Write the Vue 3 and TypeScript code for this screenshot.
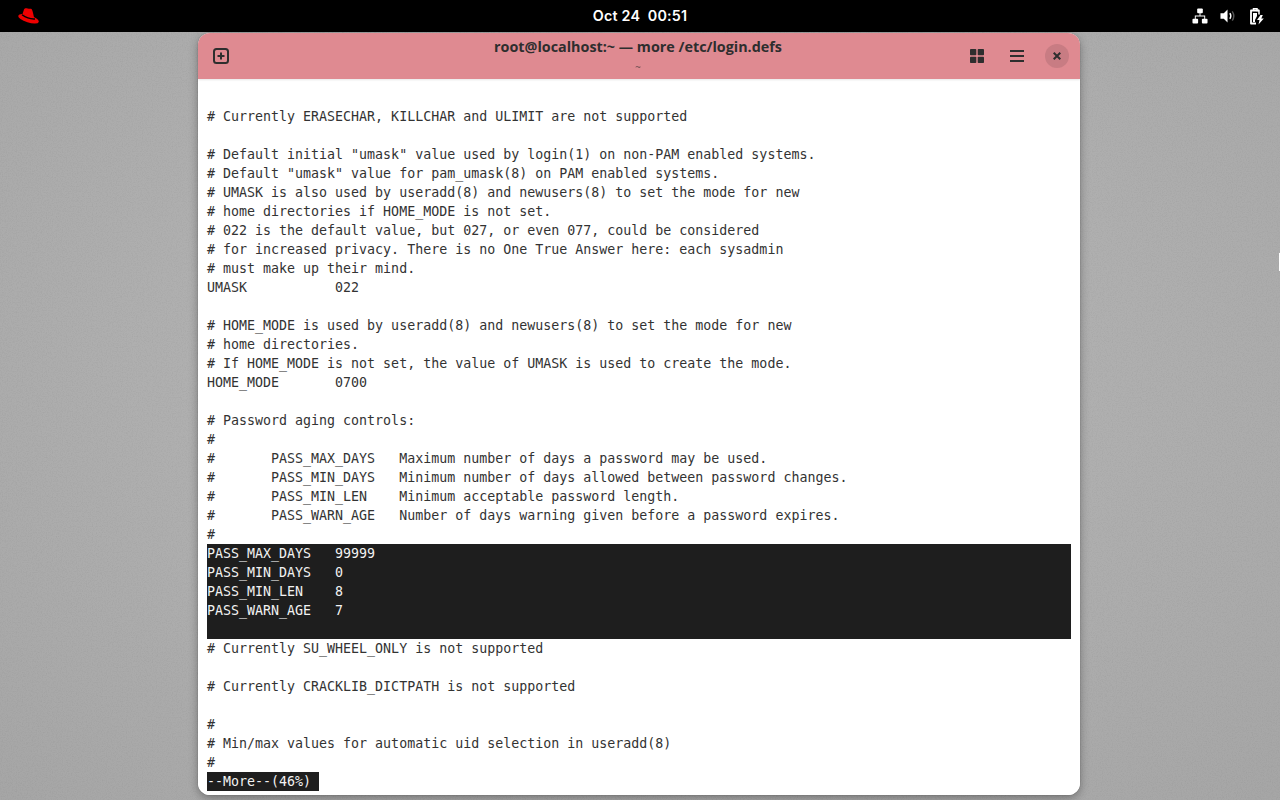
<script setup lang="ts">
const lines: { text: string; inv?: boolean }[] = [
  { text: '' },
  { text: '# Currently ERASECHAR, KILLCHAR and ULIMIT are not supported' },
  { text: '' },
  { text: '# Default initial "umask" value used by login(1) on non-PAM enabled systems.' },
  { text: '# Default "umask" value for pam_umask(8) on PAM enabled systems.' },
  { text: '# UMASK is also used by useradd(8) and newusers(8) to set the mode for new' },
  { text: '# home directories if HOME_MODE is not set.' },
  { text: '# 022 is the default value, but 027, or even 077, could be considered' },
  { text: '# for increased privacy. There is no One True Answer here: each sysadmin' },
  { text: '# must make up their mind.' },
  { text: 'UMASK           022' },
  { text: '' },
  { text: '# HOME_MODE is used by useradd(8) and newusers(8) to set the mode for new' },
  { text: '# home directories.' },
  { text: '# If HOME_MODE is not set, the value of UMASK is used to create the mode.' },
  { text: 'HOME_MODE       0700' },
  { text: '' },
  { text: '# Password aging controls:' },
  { text: '#' },
  { text: '#       PASS_MAX_DAYS   Maximum number of days a password may be used.' },
  { text: '#       PASS_MIN_DAYS   Minimum number of days allowed between password changes.' },
  { text: '#       PASS_MIN_LEN    Minimum acceptable password length.' },
  { text: '#       PASS_WARN_AGE   Number of days warning given before a password expires.' },
  { text: '#' },
  { text: 'PASS_MAX_DAYS   99999', inv: true },
  { text: 'PASS_MIN_DAYS   0', inv: true },
  { text: 'PASS_MIN_LEN    8', inv: true },
  { text: 'PASS_WARN_AGE   7', inv: true },
  { text: '', inv: true },
  { text: '# Currently SU_WHEEL_ONLY is not supported' },
  { text: '' },
  { text: '# Currently CRACKLIB_DICTPATH is not supported' },
  { text: '' },
  { text: '#' },
  { text: '# Min/max values for automatic uid selection in useradd(8)' },
  { text: '#' },
]
</script>

<template>
  <div class="screen">
    <svg class="grain" width="1280" height="800">
      <filter id="grain-f">
        <feTurbulence type="fractalNoise" baseFrequency="0.8" numOctaves="2" seed="4" />
        <feColorMatrix type="matrix" values="0 0 0 0 0  0 0 0 0 0  0 0 0 0 0  1.2 0 0 0 -0.5" />
      </filter>
      <rect width="1280" height="800" filter="url(#grain-f)" opacity="0.07" />
    </svg>
    <header class="topbar">
      <svg class="hat" width="21" height="16" viewBox="0 0 21 16">
        <path d="M4.500 6L6 1.600C6.500.3 8 0 9.500.6c1.500.4 3 -.4 4 .4 1 .8 2 5.500 2.500 8.500Z" fill="#ee0000"/>
        <ellipse cx="10.500" cy="10.800" rx="10.700" ry="3.700" transform="rotate(17 10.500 10.800)" fill="#ee0000"/>
        <path d="M4 6.800C8 9.700 12 11.400 17 11" fill="none" stroke="#000" stroke-width="1.400"/>
      </svg>
      <span class="clock">Oct 24&nbsp; 00:51</span>
      <div class="tray">
        <svg width="16" height="16" viewBox="0 0 17 17" fill="#fff">
          <rect x="5.500" y="0.500" width="6" height="5" rx="1"/>
          <rect x="0.500" y="11.500" width="6" height="5" rx="1"/>
          <rect x="10.500" y="11.500" width="6" height="5" rx="1"/>
          <path d="M8 5h1v3h5v4h-1V9H4v3H3V8h5Z"/>
        </svg>
        <svg width="16" height="16" viewBox="0 0 17 17">
          <path d="M8 1.500v14L4 11.500H0.500v-6H4Z" fill="#fff"/>
          <path d="M10.500 5.500c1.200 1.800 1.200 4.200 0 6" fill="none" stroke="#fff" stroke-width="1.500"/>
          <path d="M13 3.500c2 3 2 7 0 10" fill="none" stroke="#555" stroke-width="1.500"/>
        </svg>
        <svg class="batt" width="16" height="17" viewBox="0 0 16 17" fill="none">
          <path d="M4.500 2.500V.8h3.500v1.700h2v4" stroke="#fff" stroke-width="1.500"/>
          <path d="M10 2.500H2v13h5" stroke="#fff" stroke-width="1.800" stroke-linejoin="round"/>
          <path d="M4 5h4v3L6 12v2H4Z" fill="#fff"/>
          <path d="M11.500 7l-3.500 5h2.500l-1 4.500 5.300-6h-2.500l1.500-3.500Z" fill="#fff"/>
        </svg>
      </div>
    </header>

    <main class="desktop">
      <section class="window">
        <div class="titlebar">
          <div class="side">
            <button class="icon-btn left">
              <svg width="16" height="16" viewBox="0 0 16 16" fill="none" stroke="#2e2e2e">
                <rect x="1" y="1" width="14" height="14" rx="2.500" stroke-width="2"/>
                <path d="M8 4.500v7M4.500 8h7" stroke-width="2"/>
              </svg>
            </button>
          </div>
          <div class="titles">
            <div class="title">root@localhost:~ — more /etc/login.defs</div>
            <div class="subtitle">~</div>
          </div>
          <div class="side end">
            <button class="icon-btn grid">
              <svg width="14" height="14" viewBox="0 0 14 14" fill="#2e2e2e">
                <rect width="6.300" height="6.300" rx="0.800"/>
                <rect x="7.700" width="6.300" height="6.300" rx="0.800"/>
                <rect y="7.700" width="6.300" height="6.300" rx="0.800"/>
                <rect x="7.700" y="7.700" width="6.300" height="6.300" rx="0.800"/>
              </svg>
            </button>
            <button class="icon-btn menu">
              <svg width="14" height="12" viewBox="0 0 14 12" fill="#2e2e2e">
                <rect width="14" height="2"/>
                <rect y="5" width="14" height="2"/>
                <rect y="10" width="14" height="2"/>
              </svg>
            </button>
            <button class="icon-btn close">
              <svg width="8" height="8" viewBox="0 0 8 8" fill="none" stroke="#2e2e2e" stroke-width="2">
                <path d="M.7.7l6.600 6.600M7.300.7L.7 7.300"/>
              </svg>
            </button>
          </div>
        </div>
        <div class="term">
          <div v-for="(l, i) in lines" :key="i" class="row" :class="{ inv: l.inv }">{{ l.text }}</div>
          <div class="row"><span class="more">--More--(46%)&nbsp;</span></div>
        </div>
      </section>
    </main>
    <i class="cursor"></i>
  </div>
</template>

<style>
html, body { margin: 0; background: #000; }
</style>

<style scoped>
.screen {
  position: relative;
  width: 1280px;
  height: 800px;
  overflow: hidden;
  display: flex;
  flex-direction: column;
  background: radial-gradient(ellipse 900px 620px at 640px 350px, #b5b5b5 0%, #afafaf 55%, #a6a6a6 100%);
}
.grain {
  position: absolute;
  left: 0;
  top: 0;
}
.topbar {
  height: 32px;
  flex: none;
  background: #000;
  display: grid;
  grid-template-columns: 1fr auto 1fr;
  align-items: center;
  color: #fff;
  position: relative;
  z-index: 2;
}
.hat { margin-left: 18px; margin-top: 0; }
.clock {
  font: 600 14.300px "Inter", "Open Sans", sans-serif;
  letter-spacing: .2px;
  margin-top: -1px;
}
.tray {
  justify-self: end;
  display: flex;
  gap: 12px;
  padding-right: 15px;
}
.batt { margin-left: 1px; }
.desktop {
  flex: 1;
  min-height: 0;
  padding: 1px 200px 5px 198px;
  position: relative;
}
.window {
  height: 100%;
  display: flex;
  flex-direction: column;
  border-radius: 12px;
  overflow: hidden;
  background: #fff;
  box-shadow: 0 3px 10px rgba(0,0,0,.32), 0 0 0 1px rgba(0,0,0,.05);
}
.titlebar {
  height: 46px;
  flex: none;
  background: #df8a91;
  display: grid;
  grid-template-columns: 1fr auto 1fr;
  align-items: center;
  box-shadow: 0 1px 2px rgba(0,0,0,.1);
  position: relative;
  z-index: 1;
}
.side { display: flex; align-items: center; }
.side.end { justify-content: flex-end; }
.icon-btn {
  border: 0;
  background: none;
  padding: 0;
  display: flex;
  align-items: center;
  justify-content: center;
  flex: none;
}
.icon-btn.left { margin-left: 15px; width: 16px; height: 16px; }
.titles {
  text-align: center;
  color: #2e2e2e;
  font-family: "Open Sans", "Noto Sans", sans-serif;
  margin-top: -3px;
  margin-right: 2px;
}
.title { font-size: 14.350px; font-weight: 700; line-height: 20px; }
.subtitle { font-size: 10px; line-height: 12px; opacity: .7; margin-top: 4px; }
.icon-btn.grid { margin-right: 26px; width: 14px; height: 14px; margin-top: -1px; }
.icon-btn.menu { margin-right: 21px; width: 14px; height: 12px; margin-top: -1px; }
.icon-btn.close {
  width: 24px;
  height: 24px;
  border-radius: 50%;
  background: #c87c83;
  margin-right: 11px;
  margin-top: -1px;
}
.term {
  flex: 1;
  min-height: 0;
  padding: 9px 9px 0;
  background: #fff;
  color: #333;
  font: 13.300px/19px "DejaVu Sans Mono", monospace;
}
.row {
  height: 19px;
  white-space: pre;
}
.row.inv { background: #1e1e1e; color: #f2f2f2; }
.more {
  display: inline-block;
  height: 19px;
  background: #1e1e1e;
  color: #f2f2f2;
}
.cursor {
  position: absolute;
  left: 1279px;
  top: 253px;
  width: 1px;
  height: 18px;
  background: #fff;
}
</style>
